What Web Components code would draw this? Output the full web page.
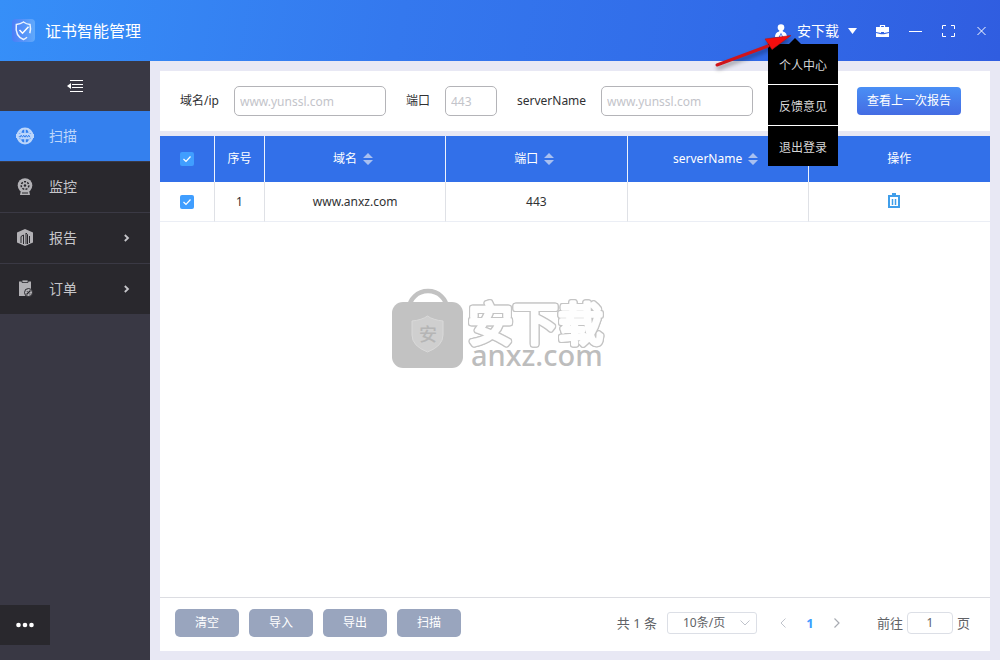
<!DOCTYPE html>
<html lang="zh-CN">
<head>
<meta charset="utf-8">
<title>证书智能管理</title>
<style>
  html, body { margin: 0; height: 100%; }
  body {
    font: 12px/18px "Noto Sans", "Noto Sans CJK SC", sans-serif;
    color: #303133;
    background: #e8e8f4;
  }
</style>
</head>
<body>
<cert-app></cert-app>

<script>
const define = (name, html, setup) => {
  const tpl = document.createElement('template');
  tpl.innerHTML = '<style>*{box-sizing:border-box}button,input,select{font:inherit;color:inherit;margin:0}button{border:0;padding:0;background:none;cursor:pointer}svg{display:block}</style>' + html;
  customElements.define(name, class extends HTMLElement {
    constructor() {
      super();
      this.attachShadow({ mode: 'open' }).append(tpl.content.cloneNode(true));
    }
    connectedCallback() { if (setup) setup(this, this.shadowRoot); }
  });
};

/* ---------- user drop-down in the title bar ---------- */
define('user-menu', `
<style>
  :host { display: block; position: relative; }
  .user { display: flex; align-items: center; gap: 9px; color: #fff; font-size: 14px; line-height: 20px; }
  .menu { position: absolute; z-index: 5; top: 23px; left: -6px; width: 70px; margin: 0; padding: 0; list-style: none; display: grid; gap: 1px; background: #fff; }
  .menu::before { content: ""; position: absolute; top: -6px; left: 21px; border: 6px solid transparent; border-top: 0; border-bottom-color: #000; }
  .menu a { display: block; height: 40px; background: #000; color: #d6d6d6; text-align: center; text-decoration: none; line-height: 44px; }
  .pointer { position: absolute; z-index: 6; top: 10px; left: -62px; pointer-events: none; filter: drop-shadow(1px 3px 2px #0006); }
</style>
<button class="user" type="button" aria-haspopup="true" aria-expanded="true">
  <svg width="14" height="14" viewBox="0 0 14 14" fill="#fff"><circle cx="7" cy="3.500" r="3.300"/><path d="M5.500 6h3l.4 1.600C11.800 8.500 13 10.500 13 13H9.200L7 8.800 4.800 13H1C1 10.500 2.200 8.500 5.100 7.600z"/><path d="M7 10l1 3H6z"/></svg>
  <span>安下载</span>
  <svg width="9" height="6" viewBox="0 0 9 6" fill="#fff"><path d="M0 0h9L4.500 6z"/></svg>
</button>
<ul class="menu">
  <li><a href="#profile">个人中心</a></li>
  <li><a href="#feedback">反馈意见</a></li>
  <li><a href="#logout">退出登录</a></li>
</ul>
<svg class="pointer" width="86" height="40" viewBox="0 0 86 40"><path d="M5 34L56 15" stroke="#d0141a" stroke-width="3" stroke-linecap="round"/><path d="M79 4.500L60 18.500 57.500 14.500 53 8z" fill="#f40d0d" stroke="#b01515" stroke-width=".6"/></svg>
`);

/* ---------- title bar ---------- */
define('title-bar', `
<style>
  :host { display: flex; align-items: center; height: 61px; padding: 0 12px; color: #fff;
    background: linear-gradient(100deg, #368ff8 0%, #3478ee 40%, #316ae8 75%, #305de0 100%); }
  h1 { margin: 0 auto 0 10px; font-size: 16px; line-height: 24px; font-weight: 400; }
  user-menu { margin-right: 19px; }
  .tools { display: flex; gap: 20px; }
  .tools button { display: grid; place-items: center; width: 13px; height: 20px; }
</style>
<svg width="23" height="23" viewBox="0 0 23 23"><defs><linearGradient id="g" x2="1"><stop stop-color="#4a7df6"/><stop offset="1" stop-color="#60a9fb"/></linearGradient></defs><rect width="23" height="23" rx="4" fill="url(#g)"/><path d="M17.800 14.200C18.700 11 18.400 7 18 5.500 15.500 5.300 13.500 4.500 11.500 3 9.500 4.500 7 5.300 4.300 5.500 3.500 12 5 18 11.500 20.500q2-.8 3.500-2.200" fill="none" stroke="#eaf3ff" stroke-width="1.500"/><path d="M7.500 11l3 3.200 6-6.400" fill="none" stroke="#fff" stroke-width="1.500"/></svg>
<h1>证书智能管理</h1>
<user-menu></user-menu>
<div class="tools">
  <button type="button" aria-label="工具箱"><svg width="13" height="12" viewBox="0 0 13 12"><path d="M4.500 2.500v-2h4v2" fill="none" stroke="#fff" stroke-width="1.200"/><path d="M0 2h13v5L8 8V7H5v1L0 7zM0 8l5 1.200h3L13 8v4H0z" fill="#fff"/></svg></button>
  <button type="button" aria-label="最小化"><svg width="13" height="12" viewBox="0 0 13 12"><path d="M0 6.500h13" stroke="#fff"/></svg></button>
  <button type="button" aria-label="全屏"><svg width="13" height="12" viewBox="0 0 13 12"><path d="M.5 4V.5H4M9 .5h3.500V4M12.500 8v3.500H9M4 11.500H.5V8" fill="none" stroke="#fff"/></svg></button>
  <button type="button" aria-label="关闭"><svg width="13" height="12" viewBox="0 0 13 12"><path d="M2.500 2l8 8M10.500 2l-8 8" stroke="#fff"/></svg></button>
</div>
`);

/* ---------- side navigation ---------- */
define('nav-item', `
<style>
  :host { display: block; border-top: 1px solid #3a3944; background: #29282d; color: #c6c6ca; }
  :host([active]) { border: 0; background: #3480ee; color: #bcd6fb; }
  a { display: flex; align-items: center; gap: 14px; height: 50px; padding: 0 20px 0 15px; color: inherit; text-decoration: none; font-size: 14px; line-height: 20px; }
  .arrow { display: none; margin-left: auto; }
  :host([expandable]) .arrow { display: block; }
  ::slotted(svg) { display: block; }
</style>
<a><slot name="icon"></slot><span><slot></slot></span><svg class="arrow" width="6" height="8" viewBox="0 0 6 8"><path d="M.8 1L4 4 .8 7" fill="none" stroke="#c6c6ca" stroke-width="1.800"/></svg></a>
`, (host, root) => { root.querySelector('a').href = host.getAttribute('href'); });

define('side-nav', `
<style>
  :host { display: flex; flex-direction: column; background: #393844; }
  .fold { display: grid; place-items: center; height: 50px; }
  .more { display: grid; place-items: center; width: 50px; height: 40px; margin: auto 0 15px; background: #29282d; }
  nav { display: block; }
</style>
<button class="fold" type="button" aria-label="收起菜单"><svg width="16" height="12" viewBox="0 0 16 12"><path d="M3 .5h13M5 4.500h11M5 7.500h11M3 11.500h13" stroke="#fff"/><path d="M0 6l4-3v6z" fill="#fff"/></svg></button>
<nav>
  <nav-item active href="#scan"><svg slot="icon" width="20" height="20" viewBox="0 0 20 20"><circle cx="10" cy="10" r="7.500" fill="none" stroke="#bcd6fb" stroke-width="2"/><path d="M4 6.500q6 2.500 12 0M4 13.500q6-2.500 12 0M7 3.500q-2 3-1.500 5M13 3.500q2 3 1.500 5M7 16.500q-2-2-1.500-4M13 16.500q2-2 1.500-4M10 3v5M10 12v5" fill="none" stroke="#bcd6fb" stroke-width="1.500"/><path d="M1 10h18" stroke="#bcd6fb" stroke-width="4"/><path d="M4 10.200l1 1 1.200-2 1.300 2 1.200-2 1.300 2 1.200-2 1.300 2 1.200-2 1.300 2" fill="none" stroke="#3480ee" stroke-width="1"/></svg>扫描</nav-item>
  <nav-item href="#monitor"><svg slot="icon" width="20" height="20" viewBox="0 0 20 20"><path d="M6 13h8l1 5H5z" fill="#b2b1b5"/><circle cx="10" cy="8.500" r="7.300" fill="#b2b1b5"/><circle cx="10" cy="8.500" r="3.800" fill="none" stroke="#29282d" stroke-width="1.500" stroke-dasharray="2 1.300"/><circle cx="10" cy="8.500" r="1.200" fill="#29282d"/><path d="M7 16h6" stroke="#29282d"/></svg>监控</nav-item>
  <nav-item expandable href="#report"><svg slot="icon" width="20" height="20" viewBox="0 0 20 20"><path d="M10 1l8 3.500v10L10 18l-8-3.500v-10z" fill="#b2b1b5"/><path d="M6 15V8.500L8.500 7v9M11 16V5l1.500 1.500V16M14.500 15V8" fill="none" stroke="#29282d" stroke-width="1"/></svg>报告</nav-item>
  <nav-item expandable href="#order"><svg slot="icon" width="20" height="20" viewBox="0 0 20 20"><path d="M4 2.500h12V17H4z" fill="#b2b1b5"/><path d="M7 1h6v2.500H7z" fill="#b2b1b5" stroke="#29282d" stroke-width=".8"/><circle cx="13.500" cy="13.500" r="4" fill="#b2b1b5" stroke="#29282d"/><path d="M11.500 15.500l4-4M11.800 12.500h.8M14.500 14.800h.8" stroke="#29282d" stroke-width="1.200"/></svg>订单</nav-item>
</nav>
<button class="more" type="button" aria-label="更多"><svg width="18" height="6" viewBox="0 0 18 6" fill="#fff"><circle cx="2.500" cy="3" r="2.300"/><circle cx="9" cy="3" r="2.300"/><circle cx="15.500" cy="3" r="2.300"/></svg></button>
`);

/* ---------- search bar ---------- */
define('text-field', `
<style>
  :host { display: flex; align-items: center; gap: 15px; }
  label { white-space: nowrap; }
  input { width: var(--field-width, 152px); height: 30px; padding: 0 5px; border: 1px solid #b4b4b8; border-radius: 5px; background: #fff; outline: 0; }
  input::placeholder { color: #c3c4ca; opacity: 1; }
</style>
<label for="field"><slot></slot></label><input id="field" type="text">
`, (host, root) => { root.querySelector('input').placeholder = host.getAttribute('placeholder'); });

define('search-bar', `
<style>
  :host { display: block; background: #fff; }
  form { display: flex; align-items: center; gap: 20px; height: 60px; padding: 0 29px 0 20px; }
  .port { --field-width: 52px; }
  button { width: 104px; height: 28px; margin-left: auto; border-radius: 4px; color: #fff; background: linear-gradient(#4a8ff5, #446ce3); }
</style>
<form>
  <text-field placeholder="www.yunssl.com">域名/ip</text-field>
  <text-field class="port" placeholder="443">端口</text-field>
  <text-field placeholder="www.yunssl.com">serverName</text-field>
  <button type="button">查看上一次报告</button>
</form>
`);

/* ---------- result table ---------- */
define('sort-toggle', `
<style>
  :host { display: block; }
  button { display: block; }
</style>
<button type="button" aria-label="排序"><svg width="10" height="12" viewBox="0 0 10 12" fill="#a9c0f0"><path d="M5 0l5 5H0zM0 7h10l-5 5z"/></svg></button>
`);

define('result-table', `
<style>
  :host { display: block; }
  table { width: 100%; table-layout: fixed; border-collapse: separate; border-spacing: 0; text-align: center; }
  .pick { width: 55px; } .no { width: 50px; }
  th, td { padding: 0; border-right: 1px solid #dfe1e6; }
  th { height: 46px; background: #3270e9; color: #fff; font-weight: 400; border-color: #eef3fd; }
  td { height: 40px; border-bottom: 1px solid #ebeef5; }
  th:last-child, td:last-child { border-right: 0; }
  .sortable { display: flex; align-items: center; justify-content: center; gap: 6px; padding-right: 4px; }
  input { appearance: none; display: block; width: 14px; height: 14px; margin: 0 auto; border-radius: 2px; background: #409eff url("data:image/svg+xml,%3Csvg xmlns='http://www.w3.org/2000/svg' viewBox='0 0 14 14'%3E%3Cpath d='M3.500 7l2.500 2.500 4.500-5' fill='none' stroke='white' stroke-width='1.200'/%3E%3C/svg%3E"); }
  td button { display: block; margin: 0 auto; padding: 0 10px 2px 0; }
</style>
<table>
  <colgroup><col class="pick"><col class="no"><col><col><col><col></colgroup>
  <thead><tr>
    <th><input type="checkbox" checked aria-label="全选"></th>
    <th>序号</th>
    <th><div class="sortable">域名<sort-toggle></sort-toggle></div></th>
    <th><div class="sortable">端口<sort-toggle></sort-toggle></div></th>
    <th><div class="sortable">serverName<sort-toggle></sort-toggle></div></th>
    <th>操作</th>
  </tr></thead>
  <tbody><tr>
    <td><input type="checkbox" checked aria-label="选择第1行"></td>
    <td>1</td>
    <td>www.anxz.com</td>
    <td>443</td>
    <td></td>
    <td><button type="button" aria-label="删除"><svg width="12" height="15" viewBox="0 0 12 15"><path d="M0 2h4V0h4v2h4v2H0z" fill="#409eea"/><path d="M1 3v11h10V3" fill="none" stroke="#409eea" stroke-width="2"/><path d="M4.500 6v6M7.500 6v6" stroke="#409eea" stroke-width="1.500"/></svg></button></td>
  </tr></tbody>
</table>
`);

/* ---------- brand watermark ---------- */
define('brand-mark', `
<style>
  :host { display: block; }
  .name { font: 400 45px "Liberation Sans", "Noto Sans CJK SC", sans-serif; fill: #fefefe; stroke: #fefefe; stroke-width: 4px; stroke-linejoin: round;
    filter: drop-shadow(1px 0 0 #c4c4c4) drop-shadow(-1px 0 0 #c4c4c4) drop-shadow(0 1px 0 #c4c4c4) drop-shadow(0 -1px 0 #c4c4c4); }
  .site { font: 500 29px "Noto Sans", sans-serif; fill: #bdbdbd; }
  .seal { font: 500 18px "Noto Sans CJK SC", sans-serif; fill: #b5b5b5; }
</style>
<svg width="216" height="92" viewBox="0 0 216 92">
  <path d="M17 21a19 18 0 0 1 38 0" fill="none" stroke="#c2c2c2" stroke-width="4.500"/>
  <rect x="0" y="14" width="71" height="66" rx="11" fill="#c2c2c2"/>
  <path d="M20 33q10-1 15.500-5 5.500 4 15.500 5v14q0 11-15.500 17Q20 58 20 47z" fill="#cfcfcf" stroke="#d9d9d9"/>
  <text class="seal" x="27" y="53">安</text>
  <text class="name" x="76" y="53">安下载</text>
  <text class="site" x="79" y="78">anxz.com</text>
</svg>
`);

/* ---------- batch actions and pagination ---------- */
define('page-footer', `
<style>
  :host { display: flex; align-items: center; gap: 10px; height: 54px; padding: 0 20px 4px 15px; border-top: 1px solid #dcdde2; }
  .act { width: 64px; height: 28px; border-radius: 5px; color: #fff; background: #99a5be; }
  .pager { display: flex; align-items: center; margin-left: auto; font-size: 13px; color: #606266; }
  .size { position: relative; display: flex; margin: 0 20px 0 10px; }
  .size svg { position: absolute; right: 7px; top: 8px; pointer-events: none; }
  select { appearance: none; width: 90px; height: 22px; padding: 0 0 0 15px; border: 1px solid #dcdfe6; border-radius: 3px; background: #fff; font-size: 12px; line-height: 20px; outline: 0; }
  .step { display: grid; place-items: center; width: 12px; height: 22px; }
  .current { width: 42px; text-align: center; color: #409eff; font-weight: 700; text-decoration: none; }
  label { display: flex; align-items: center; gap: 4px; margin-left: 34px; }
  label input { width: 46px; height: 22px; padding: 0; border: 1px solid #dcdfe6; border-radius: 4px; text-align: center; font-size: 12px; background: #fff; outline: 0; }
</style>
<button class="act" type="button">清空</button>
<button class="act" type="button">导入</button>
<button class="act" type="button">导出</button>
<button class="act" type="button">扫描</button>
<div class="pager">
  <span>共 1 条</span>
  <div class="size"><select aria-label="每页条数"><option>10条/页</option></select><svg width="10" height="6" viewBox="0 0 10 6"><path d="M.5.5L5 5 9.500.5" fill="none" stroke="#c0c4cc"/></svg></div>
  <button class="step" type="button" aria-label="上一页"><svg width="6" height="10" viewBox="0 0 6 10"><path d="M5.500.5L1 5l4.500 4.500" fill="none" stroke="#c0c4cc"/></svg></button>
  <a class="current" href="#page-1" aria-current="page">1</a>
  <button class="step" type="button" aria-label="下一页"><svg width="6" height="10" viewBox="0 0 6 10"><path d="M.5.5L5 5 .5 9.500" fill="none" stroke="#a8abb2" stroke-width="1.200"/></svg></button>
  <label><span>前往</span><input type="text" inputmode="numeric" value="1"><span>页</span></label>
</div>
`);

/* ---------- application frame ---------- */
define('cert-app', `
<style>
  :host { display: grid; grid-template: auto 1fr / 150px minmax(0, 1fr); min-height: 100%; }
  title-bar { grid-column: 1 / -1; }
  main { display: flex; flex-direction: column; gap: 5px; padding: 10px 10px 9px; }
  section { flex: 1; display: flex; flex-direction: column; background: #fff; }
  .body { flex: 1; display: flex; justify-content: center; padding: 66px 0 20px; }
  brand-mark { margin-right: 150px; }
</style>
<title-bar></title-bar>
<side-nav></side-nav>
<main>
  <search-bar></search-bar>
  <section>
    <result-table></result-table>
    <div class="body"><brand-mark></brand-mark></div>
    <page-footer></page-footer>
  </section>
</main>
`);
</script>
</body>
</html>
